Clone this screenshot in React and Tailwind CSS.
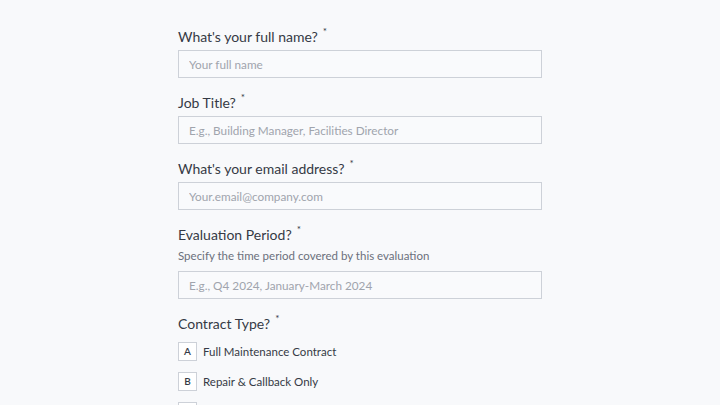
import React from 'react';

function Label({ children }) {
  return (
    <div className="h-[20px] flex items-center text-[14px] text-[#353a45]">
      <span>{children}</span>
      <span className="ml-[5px] -mt-[10px] text-[10px] text-[#353a45]">*</span>
    </div>
  );
}

function Field({ label, placeholder, hint }) {
  return (
    <div className="mb-[14px]">
      <Label>{label}</Label>
      {hint && (
        <p className="mt-[2px] h-[19px] flex items-center text-[11.5px] text-[#6b707b]">{hint}</p>
      )}
      <input
        type="text"
        placeholder={placeholder}
        className={`block w-full h-[28px] ${hint ? 'mt-[6px]' : 'mt-[4px]'} px-[10px] border border-[#cdd1d8] bg-[#f9fafc] text-[11.75px] text-[#353a45] placeholder:text-[#a0a4ad] outline-none`}
      />
    </div>
  );
}

function Option({ letter, text }) {
  return (
    <div className="flex items-center h-[19px] mb-[11px]">
      <div className="w-[19px] h-[19px] flex items-center justify-center border border-[#cdd1d8] bg-white text-[10px] font-semibold text-[#353a45]">
        {letter}
      </div>
      <span className="ml-[6px] text-[11.5px] text-[#353a45]">{text}</span>
    </div>
  );
}

export default function App() {
  return (
    <div className="min-h-screen bg-[#f8f9fb] font-['Lato',sans-serif]">
      <div className="w-[364px] mx-auto pt-[26px] pb-[20px]">
        <Field label="What's your full name?" placeholder="Your full name" />
        <Field label="Job Title?" placeholder="E.g., Building Manager, Facilities Director" />
        <Field label="What's your email address?" placeholder="Your.email@company.com" />
        <Field
          label="Evaluation Period?"
          hint="Specify the time period covered by this evaluation"
          placeholder="E.g., Q4 2024, January-March 2024"
        />
        <div>
          <Label>Contract Type?</Label>
          <div className="mt-[9px]">
            <Option letter="A" text="Full Maintenance Contract" />
            <Option letter="B" text="Repair & Callback Only" />
            <Option letter="C" text="Preventive Maintenance Only" />
          </div>
        </div>
      </div>
    </div>
  );
}
